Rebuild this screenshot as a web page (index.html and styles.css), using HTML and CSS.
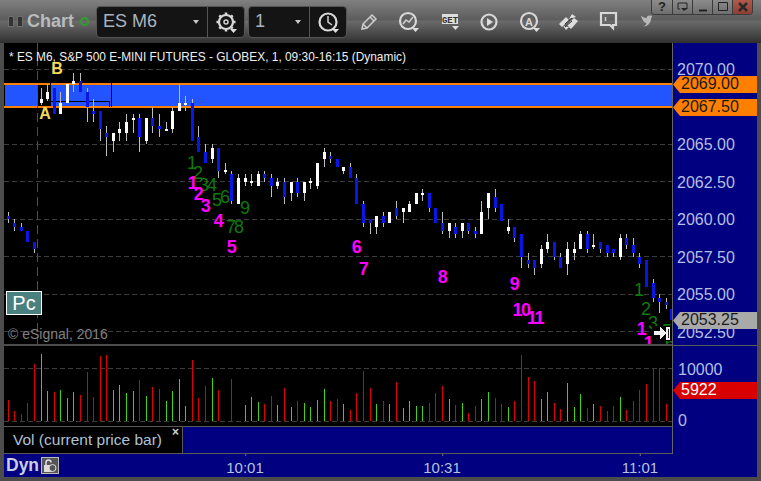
FILE: index.html
```html
<!DOCTYPE html>
<html lang="en">
<head>
<meta charset="utf-8">
<title>Chart</title>
<link rel="stylesheet" href="styles.css">
</head>
<body>
<div class="app">
  <header class="toolbar">
    <svg class="grip" width="15" height="11" viewBox="0 0 15 11"><path d="M.5.5h5v10h-5zM9.500.5h5v10h-5z"/></svg>
    <span class="app-title">Chart</span>
    <span class="status-dot"></span>
    <div class="combo combo-symbol">
      <span class="combo-value">ES M6</span>
      <span class="caret"></span>
      <span class="combo-btn">
        <svg width="24" height="24" viewBox="0 0 24 24"><circle cx="11" cy="11" r="7" class="ic-thick"/><circle cx="11" cy="11" r="2" class="ic"/><path class="ic-dash" d="M11 1.500v3M11 17.500v3M1.500 11h3M17.500 11h3M4.300 4.300l2 2M15.700 15.700l2 2M17.700 4.300l-2 2M6.300 15.700l-2 2"/><path class="ic-fill" d="M15 18h7l-3.500 4z"/></svg>
      </span>
    </div>
    <div class="combo combo-interval">
      <span class="combo-value">1</span>
      <span class="caret"></span>
      <span class="combo-btn">
        <svg width="24" height="24" viewBox="0 0 24 24"><circle cx="11" cy="11" r="8.500" class="ic-thick"/><path class="ic" d="M11 5v6l4 3"/><path class="ic-fill" d="M15 18h7l-3.500 4z"/></svg>
      </span>
    </div>
    <div class="tools">
      <svg class="tool t-pencil" width="20" height="20" viewBox="0 0 20 20"><path class="ic" d="M3 17l1-5L13 3l4 4-9 9zM11 5l4 4M4 12l4 4"/></svg>
      <svg class="tool t-perf" width="24" height="24" viewBox="0 0 24 24"><circle cx="11" cy="11" r="8" class="ic-thick"/><path class="ic" d="M6 14l3-4 3 2 4-5"/><path class="ic-fill" d="M15 18h7l-3.500 4z"/></svg>
      <svg class="tool t-get" width="24" height="20" viewBox="0 0 24 20"><path class="ic-fill" d="M3 2h16v10H3z"/><text x="11" y="10.500" class="get-text">GET</text><path class="ic-fill" d="M13 14h7l-3.500 4z"/></svg>
      <svg class="tool t-play" width="20" height="20" viewBox="0 0 20 20"><circle cx="10" cy="10" r="7.500" class="ic-thick"/><path class="ic-fill" d="M8 6l6 4-6 4z"/></svg>
      <svg class="tool t-auto" width="24" height="24" viewBox="0 0 24 24"><circle cx="11" cy="11" r="8" class="ic-thick"/><text x="11" y="15.500" class="a-text">A</text><path class="ic-fill" d="M15 18h7l-3.500 4z"/></svg>
      <svg class="tool t-swap" width="22" height="22" viewBox="0 0 22 22"><path class="ic-fill" d="M1 13l7-7 3 3-7 7zM9 14l7-7 4 3-7 8zM11 8l3-5 4 3zM5 15l3 4 3-3z"/><path class="ic-dark" d="M7 13l7-6M7 16l7-6"/></svg>
      <svg class="tool t-chat" width="20" height="20" viewBox="0 0 20 20"><path class="ic-thick" d="M2 2h15v12h-3v3l-3-3H2z"/><path class="ic" d="M6.500 6v4"/></svg>
      <svg class="tool t-bird" width="11" height="14" viewBox="0 0 14 16"><path class="ic-bird" d="M0 1c2 2 4 3 7 3.500C7 2 10 0 13 1.500l1-.5v2l-1 1c0 6-4 11-10 11 3-1 4-3 4-4C4 10 1 6 0 1z"/></svg>
    </div>
    <div class="win-buttons">
      <span class="win-btn win-help">?</span>
      <span class="win-btn"><svg width="12" height="10" viewBox="0 0 12 10"><path class="ic-win" d="M1 1h9v6H7"/><path class="ic-win" d="M1 1v6h2"/><path class="ic-win-fill" d="M4 6h6l-3 3z"/></svg></span>
      <span class="win-btn"><svg width="12" height="10" viewBox="0 0 12 10"><path class="ic-win-thick" d="M2 8.500h8"/></svg></span>
      <span class="win-btn"><svg width="12" height="10" viewBox="0 0 12 10"><path class="ic-win" d="M1.500.500h9v8h-9z"/></svg></span>
      <span class="win-btn win-close"><svg width="12" height="10" viewBox="0 0 12 10"><path class="ic-close" d="M2 1l8 8M10 1l-8 8"/></svg></span>
    </div>
  </header>

  <main class="workspace">
    <section class="panes">
      <div class="pane-price">
        <svg class="chart-svg" width="668" height="301" viewBox="4 43 668 301">
          <path class="grid" d="M4 69.500H672M4 144.500H672M4 181.500H672M4 219.500H672M4 256.500H672M4 294.500H672M4 331.500H672"/>
          <rect class="band" x="4" y="85" width="668" height="21"/>
          <path class="band-edge" d="M4 84H672M4 107H672"/>
          <rect class="box-solid" x="38" y="85" width="12" height="21"/>
          <path class="box-line" d="M4.500 85V106M50.500 83V106M111.500 83V107M50 101.500H109.500V107"/>
          <path class="cursor" d="M37.500 43V344"/>
          <path class="wick" d="M8.500 212V223M14.500 219V231M21.500 223V231M27.500 231V242M34.500 242V253M41.500 88V105M47.500 84V101M60.500 92V114M73.500 73V92M80.500 73V92M87.500 88V122M93.500 99V122M100.500 111V141M106.500 126V156M113.500 133V152M119.500 122V141M126.500 114V141M133.500 114V133M139.500 114V152M146.500 118V144M152.500 107V133M159.500 114V137M166.500 122V131M172.500 107V133M179.500 84V111M185.500 96V111M192.500 99V141M198.500 126V152M205.500 144V163M212.500 144V163M218.500 148V178M225.500 163V174M231.500 171V204M238.500 174V204M245.500 174V186M251.500 174V186M258.500 171V186M264.500 171V182M271.500 174V197M277.500 178V189M284.500 178V204M291.500 182V201M297.500 178V197M304.500 182V201M310.500 178V189M317.500 163V189M324.500 148V167M330.500 152V163M337.500 159V167M343.500 167V174M350.500 163V178M356.500 174V204M363.500 201V227M370.500 219V234M376.500 216V234M383.500 212V227M389.500 212V223M396.500 201V219M403.500 208V223M409.500 201V212M416.500 193V204M422.500 189V201M429.500 193V212M435.500 208V223M442.500 212V234M449.500 223V238M455.500 223V238M462.500 223V238M468.500 223V234M475.500 227V238M481.500 201V234M488.500 193V219M495.500 189V212M501.500 204V221M508.500 219V234M514.500 227V242M521.500 234V268M528.500 253V268M534.500 260V275M541.500 245V268M547.500 234V253M554.500 242V260M560.500 253V268M567.500 242V275M574.500 242V260M580.500 231V249M587.500 231V253M593.500 234V249M600.500 242V253M607.500 245V257M613.500 249V257M620.500 234V260M626.500 234V249M633.500 238V257M639.500 253V268M646.500 260V287M653.500 279V302M659.500 294V313M666.500 298V309"/>
          <path class="body-white" d="M41.500 99V103M47.500 92V99M60.500 103V114M67.500 84V103M73.500 81V84M113.500 133V141M119.500 129V133M126.500 122V133M133.500 118V120M146.500 118V141M166.500 129V131M172.500 111V129M179.500 103V111M185.500 103V105M212.500 148V159M225.500 170V172M238.500 178V204M245.500 178V182M251.500 181V183M258.500 174V186M277.500 182V186M291.500 182V193M304.500 182V193M310.500 181V183M317.500 163V186M324.500 152V159M343.500 167V171M376.500 216V227M389.500 212V223M403.500 208V212M409.500 204V212M416.500 193V204M422.500 193V195M449.500 223V231M462.500 223V231M481.500 212V234M488.500 193V208M508.500 227V231M541.500 249V264M547.500 242V249M567.500 249V264M574.500 249V253M580.500 234V249M593.500 245V247M620.500 238V257"/>
          <path class="body-blue" d="M8.500 216V219M14.500 223V227M21.500 227V231M27.500 231V242M34.500 242V249M54.500 88V114M80.500 81V92M87.500 92V107M93.500 111V114M100.500 111V129M106.500 133V137M139.500 118V137M152.500 118V126M159.500 126V129M192.500 103V141M198.500 137V152M205.500 152V163M218.500 148V171M231.500 174V201M264.500 174V178M271.500 178V186M284.500 182V197M297.500 182V193M330.500 156V159M337.500 159V167M350.500 167V178M356.500 178V204M363.500 204V223M370.500 219V223M383.500 216V223M396.500 208V216M429.500 193V208M435.500 208V223M442.500 223V231M455.500 227V234M468.500 223V231M475.500 231V234M495.500 197V208M501.500 204V221M514.500 227V238M521.500 234V257M528.500 260V264M534.500 260V268M554.500 242V257M560.500 257V268M587.500 234V249M600.500 242V249M607.500 245V253M613.500 249V253M626.500 238V245M633.500 245V253M639.500 257V264M646.500 260V287M653.500 283V298M659.500 298V302M666.500 302V305M671 309V320"/>
          <text class="mark" x="57" y="74">B</text>
          <text class="mark" x="45" y="119">A</text>
          <g class="num-green" transform="translate(0 1)">
            <text x="192" y="168">1</text><text x="198" y="178">2</text><text x="204" y="190">3</text><text x="212" y="190">4</text><text x="217" y="205">5</text><text x="225" y="202">6</text><text x="231" y="232">7</text><text x="239" y="232">8</text><text x="245" y="213">9</text>
            <text x="639" y="295">1</text><text x="646" y="314">2</text><text x="653" y="328">3</text><text x="667" y="336">5</text><text x="670" y="348">6</text>
          </g>
          <g class="num-pink" transform="translate(0 1)">
            <text x="192" y="188">1</text><text x="198" y="199">2</text><text x="205" y="211">3</text><text x="218" y="226">4</text><text x="231" y="252">5</text><text x="356" y="252">6</text><text x="363" y="274">7</text><text x="442" y="282">8</text><text x="514" y="289">9</text><text x="521" y="315">10</text><text x="535" y="323">11</text><text x="641" y="334">1</text><text x="648" y="348">1</text>
          </g>
          <rect class="arrow-bg" x="652" y="326" width="20" height="15"/>
          <path class="arrow" d="M654 331h6v-4l6 6-6 6v-4h-6zM666 327h4v13h-4z"/>
          <path class="arrow-slot" d="M667.500 329h1v9h-1z"/>
        </svg>
        <div class="chart-title">* ES M6, S&amp;P 500 E-MINI FUTURES - GLOBEX, 1, 09:30-16:15 (Dynamic)</div>
        <div class="pc-badge">Pc</div>
        <div class="copyright">© eSignal, 2016</div>
      </div>
      <div class="pane-volume">
        <svg class="chart-svg" width="668" height="80" viewBox="4 346 668 80">
          <path class="grid" d="M4 368.500H672M4 421.500H672"/>
          <path class="vol-red" d="M8.500 400V421M14.500 411V421M21.500 414V421M27.500 403V421M34.500 364V421M54.500 392V421M80.500 395V421M87.500 372V421M93.500 397V421M100.500 356V421M106.500 355V421M139.500 380V421M152.500 387V421M159.500 389V421M192.500 360V421M198.500 398V421M205.500 386V421M218.500 390V421M231.500 379V421M264.500 404V421M271.500 396V421M284.500 388V421M297.500 401V421M330.500 401V421M337.500 399V421M350.500 410V421M356.500 393V421M363.500 371V421M370.500 388V421M383.500 401V421M396.500 382V421M429.500 403V421M435.500 393V421M442.500 386V421M455.500 405V421M468.500 413V421M475.500 406V421M495.500 398V421M501.500 404V421M514.500 401V421M521.500 355V421M528.500 377V421M534.500 381V421M554.500 403V421M560.500 409V421M587.500 408V421M600.500 406V421M607.500 411V421M613.500 406V421M626.500 410V421M633.500 401V421M639.500 390V421M646.500 384V421M653.500 369V421M659.500 368V421M666.500 404V421"/>
          <path class="vol-green" d="M41.500 354V421M47.500 391V421M60.500 390V421M67.500 398V421M73.500 392V421M113.500 390V421M119.500 385V421M126.500 393V421M133.500 391V421M146.500 396V421M166.500 401V421M172.500 391V421M179.500 379V421M185.500 406V421M212.500 378V421M245.500 405V421M251.500 397V421M258.500 402V421M277.500 405V421M291.500 407V421M304.500 403V421M310.500 407V421M317.500 400V421M324.500 389V421M343.500 404V421M376.500 404V421M389.500 404V421M403.500 408V421M409.500 401V421M416.500 406V421M422.500 406V421M449.500 399V421M462.500 403V421M481.500 399V421M488.500 392V421M508.500 407V421M541.500 399V421M547.500 392V421M567.500 383V421M574.500 407V421M580.500 394V421M593.500 404V421M620.500 397V421"/>
        </svg>
      </div>
      <div class="study-row">
        <div class="study-tab">
          <span class="study-name">Vol (current price bar)</span>
          <span class="study-close">×</span>
        </div>
      </div>
    </section>

    <aside class="axis">
      <span class="price p-2070">2070.00</span>
      <span class="price p-2065">2065.00</span>
      <span class="price p-20625">2062.50</span>
      <span class="price p-2060">2060.00</span>
      <span class="price p-20575">2057.50</span>
      <span class="price p-2055">2055.00</span>
      <span class="price p-20525">2052.50</span>
      <span class="price p-10000">10000</span>
      <span class="price p-0">0</span>
      <span class="tag tag-orange t-2069">2069.00</span>
      <span class="tag tag-orange t-20675">2067.50</span>
      <span class="tag tag-gray t-last">2053.25</span>
      <span class="tag tag-red t-vol">5922</span>
    </aside>

    <footer class="time-axis">
      <span class="dyn">Dyn</span>
      <span class="lock">
        <svg width="16" height="15" viewBox="0 0 16 15"><path class="lock-shackle" d="M4 7V4.500a2.500 2.500 0 0 1 5 0"/><path class="lock-body" d="M2 7h8v7H2z"/><circle class="lock-clock" cx="10.500" cy="10" r="3.500"/></svg>
      </span>
      <span class="time tm-1">10:01</span>
      <span class="time tm-2">10:31</span>
      <span class="time tm-3">11:01</span>
    </footer>
  </main>
</div>
</body>
</html>
```

FILE: styles.css
```css
* { box-sizing: border-box; }
html, body { margin: 0; padding: 0; background: #4a4a4a; }
body { font-family: "Liberation Sans", Arial, sans-serif; overflow: hidden; }

.app {
  width: 761px;
  height: 481px;
  display: flex;
  flex-direction: column;
  background: #4c4c4c;
  position: relative;
}

/* toolbar */
.toolbar {
  height: 43px;
  flex: none;
  display: flex;
  align-items: center;
  padding: 0 0 0 8px;
  background: linear-gradient(#808080 0, #5c5c5c 20px, #6b6b6b 21px, #303030 43px);
  position: relative;
}
.grip { flex: none; fill: #333; stroke: #6f6f6f; }
.app-title { margin-left: 4px; font-size: 18px; font-weight: 700; color: #b8bcbc; width: 47px; }
.status-dot { width: 9px; height: 9px; margin-left: 6px; border: 2px solid #2fa02f; border-radius: 50%; flex: none; }
.combo {
  height: 32px;
  display: flex;
  align-items: center;
  background: #141414;
  border: 1px solid #555;
  border-radius: 4px;
  color: #a9b3c0;
  flex: none;
  position: relative;
}
.combo-symbol { width: 149px; margin-left: 7px; }
.combo-interval { width: 99px; margin-left: 3px; }
.combo-value { font-size: 18px; padding-left: 6px; flex: 1; }
.caret { width: 0; height: 0; border: 3px solid transparent; border-top: 4px solid #c8c8c8; border-bottom: 0; margin-right: 8px; }
.combo-btn { width: 37px; height: 30px; border-left: 1px solid #555; display: flex; align-items: center; justify-content: center; padding-left: 2px; padding-top: 2px; }
.tools { display: flex; align-items: center; flex: none; }
.tool { flex: none; }
.t-pencil { margin-left: 12px; }
.t-perf { margin-left: 18px; }
.t-get { margin-left: 18px; }
.t-play { margin-left: 16px; }
.t-auto { margin-left: 19px; }
.t-swap { margin-left: 16px; }
.t-chat { margin-left: 19px; margin-top: -2px; }
.t-bird { margin-left: 22px; margin-top: -1px; }
.ic { fill: none; stroke: #d0d0d0; stroke-width: 1.500; }
.ic-thick { fill: none; stroke: #d8d8d8; stroke-width: 2.200; }
.ic-dash { fill: none; stroke: #d8d8d8; stroke-width: 2.500; }
.ic-fill { fill: #dedede; }
.ic-dark { fill: none; stroke: #333; stroke-width: 1; }
.ic-bird { fill: #b8b8b8; }
.get-text { font: 700 9px "Liberation Mono", monospace; fill: #333; text-anchor: middle; }
.a-text { font: 700 11px "Liberation Sans", sans-serif; fill: #d8d8d8; text-anchor: middle; }

.win-buttons {
  position: absolute;
  top: 0;
  left: 651px;
  height: 15px;
  display: flex;
  border: 1px solid #3a3a3a;
  border-top: 0;
  border-radius: 0 0 4px 4px;
  overflow: hidden;
}
.win-btn {
  width: 20px;
  height: 14px;
  background: linear-gradient(#8c8c8c, #6e6e6e);
  border-left: 1px solid #3a3a3a;
  display: flex;
  align-items: center;
  justify-content: center;
}
.win-btn:first-child { border-left: 0; }
.win-help { font-size: 13px; font-weight: 700; color: #222; line-height: 14px; }
.win-close { background: linear-gradient(#b05a4c, #8e3e32); }
.ic-win { fill: none; stroke: #222; stroke-width: 1; }
.ic-win-fill { fill: #222; }
.ic-win-thick { fill: none; stroke: #222; stroke-width: 2; }
.ic-close { fill: none; stroke: #2a2a2a; stroke-width: 2.500; }

/* workspace */
.workspace {
  flex: 1;
  display: grid;
  grid-template-columns: 668px 85px;
  grid-template-rows: 411px 23px;
  padding-left: 4px;
  position: relative;
}
.panes { display: flex; flex-direction: column; }
.pane-price { height: 301px; background: #000; position: relative; flex: none; overflow: hidden; }
.pane-volume { height: 80px; margin-top: 2px; background: #000; flex: none; }
.chart-svg { display: block; shape-rendering: crispEdges; }
.grid { fill: none; stroke: #3c3c3c; stroke-width: 1; stroke-dasharray: 5 3; }
.band { fill: #2255ff; }
.band-edge { fill: none; stroke: #ff8000; stroke-width: 2; }
.box-solid { fill: #000; }
.box-line { fill: none; stroke: #000; stroke-width: 1; }
.cursor { fill: none; stroke: #4e4e4e; stroke-width: 1; stroke-dasharray: 9 5; }
.wick { fill: none; stroke: #bdbdbd; stroke-width: 1; }
.body-white { fill: none; stroke: #fff; stroke-width: 3; }
.body-blue { fill: none; stroke: #0a16e6; stroke-width: 3; }
.mark { font: 700 16px "Liberation Sans", sans-serif; fill: #f3d95a; text-anchor: middle; }
.num-green text { font: 400 18px "Liberation Sans", sans-serif; fill: #0c7a0c; text-anchor: middle; }
.num-pink text { font: 700 18px "Liberation Sans", sans-serif; fill: #ff00ff; text-anchor: middle; letter-spacing: -1.500px; }
.arrow-bg { fill: #000; }
.arrow { fill: #f2f2f2; }
.arrow-slot { fill: #222; }
.vol-red { fill: none; stroke: #e00000; stroke-width: 1; }
.vol-green { fill: none; stroke: #3fd40f; stroke-width: 1; }

.chart-title {
  position: absolute;
  left: 5px;
  top: 6px;
  font-size: 11.900px;
  line-height: 15px;
  padding-top: 1px;
  color: #f0f0f0;
  white-space: nowrap;
}
.pc-badge {
  position: absolute;
  left: 2px;
  top: 248px;
  width: 36px;
  height: 24px;
  background: #4a8080;
  border: 1px solid #fff;
  color: #fff;
  font-size: 20px;
  line-height: 22px;
  text-align: center;
}
.copyright {
  position: absolute;
  left: 4px;
  top: 283px;
  font-size: 14px;
  line-height: 16px;
  color: #808080;
  white-space: nowrap;
}

.study-row { margin-top: 0; background: #000080; border-top: 1px solid #5a5a5a; border-bottom: 1px solid #5a5a5a; flex: 1; }
.study-tab {
  width: 179px;
  height: 100%;
  background: #000;
  border-right: 1px solid #5a5a5a;
  position: relative;
  display: flex;
  align-items: center;
  padding-left: 9px;
}
.study-name { font-size: 15.500px; color: #b0c0d4; white-space: nowrap; }
.study-close { position: absolute; right: 3px; top: -1px; font-size: 12px; font-weight: 700; line-height: 12px; color: #d0d0d0; }

/* right axis */
.axis { background: #000080; border-left: 1px solid #666; position: relative; }
.axis::before {
  content: "";
  position: absolute;
  left: 0;
  right: 0;
  top: 302px;
  height: 1px;
  background: #5a5a5a;
}
.price {
  position: absolute;
  left: 4px;
  font-size: 16px;
  line-height: 16px;
  color: #b4bfe6;
  white-space: nowrap;
}
.p-2070 { top: 19px; }
.p-2065 { top: 94px; }
.p-20625 { top: 132px; }
.p-2060 { top: 169px; }
.p-20575 { top: 207px; }
.p-2055 { top: 244px; }
.p-20525 { top: 282px; }
.p-10000 { top: 319px; left: 5px; }
.p-0 { top: 370px; left: 5px; }
.tag {
  position: absolute;
  left: 0;
  width: 84px;
  height: 17px;
  padding-left: 8px;
  font-size: 16px;
  line-height: 16px;
  clip-path: polygon(0 50%, 7px 0, 100% 0, 100% 100%, 7px 100%);
  white-space: nowrap;
}
.tag-orange { background: #ff8000; color: #1a1a1a; }
.tag-gray { background: #a9a9a9; color: #1a1a1a; z-index: 1; }
.tag-red { background: #d80000; color: #fff; }
.t-2069 { top: 33px; }
.t-20675 { top: 56px; }
.t-last { top: 269px; }
.t-vol { top: 339px; }

/* bottom axis */
.time-axis {
  grid-column: 1 / span 2;
  background: #000080;
  display: flex;
  align-items: center;
  padding-left: 2px;
  position: relative;
}
.dyn { font-size: 17.500px; font-weight: 700; color: #c9cfe0; }
.lock {
  width: 18px;
  height: 17px;
  margin-left: 2px;
  background: #555;
  border: 1px solid #bbb;
  display: flex;
  align-items: center;
  justify-content: center;
}
.lock-shackle { fill: none; stroke: #ddd; stroke-width: 1.500; }
.lock-body { fill: #ddd; }
.lock-clock { fill: #555; stroke: #ddd; stroke-width: 1; }
.time {
  position: absolute;
  top: 5px;
  font-size: 15px;
  line-height: 17px;
  color: #b4c4dc;
  transform: translateX(-50%);
}
.tm-1 { left: 241px; }
.tm-2 { left: 438px; }
.tm-3 { left: 636px; }
.time::before {
  content: "";
  position: absolute;
  left: 50%;
  top: -5px;
  width: 1px;
  height: 2px;
  background: #777;
}
```
